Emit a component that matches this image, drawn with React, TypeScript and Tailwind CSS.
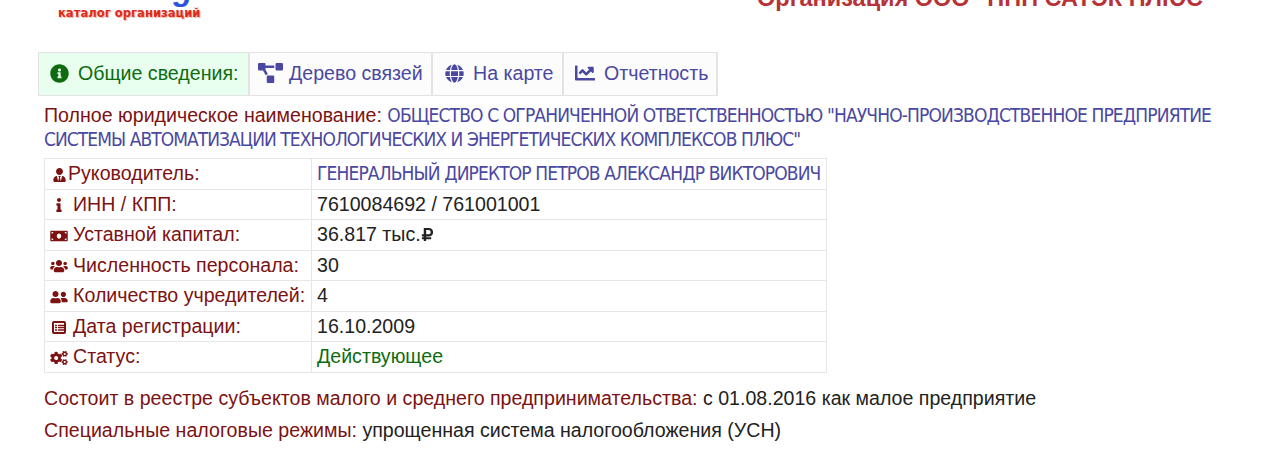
import type { ReactNode } from "react"
import {
  FaChartLine,
  FaCogs,
  FaGlobe,
  FaInfo,
  FaInfoCircle,
  FaMoneyBill,
  FaProjectDiagram,
  FaRubleSign,
  FaUserFriends,
  FaUsers,
  FaUserTie,
} from "react-icons/fa"

function ListIcon() {
  return (
    <svg width="14" height="13" viewBox="0 0 14 13" fill="none" stroke="currentColor">
      <rect x="1" y="1" width="12" height="11" rx="1" strokeWidth="2" />
      <path d="M3 4.5h2M6 4.5h6M3 6.7h2M6 6.7h6M3 9h2M6 9h6" strokeWidth="1.3" />
    </svg>
  )
}

function CapsLink({ children }: { children: ReactNode }) {
  return (
    <a
      href="#"
      className="font-['DejaVu_Sans_Condensed','DejaVu_Sans',sans-serif] text-[19px] leading-none tracking-[-0.87px] text-[#4a48a0]"
    >
      {children}
    </a>
  )
}

function Tab({ icon, children, className }: { icon: ReactNode; children: ReactNode; className: string }) {
  return (
    <li className={`flex h-11 items-center border-y border-r-2 border-[#e3e3e6] pb-0.5 whitespace-nowrap ${className}`}>
      {icon}
      <a href="#">{children}</a>
    </li>
  )
}

function Row({ icon, label, children }: { icon: ReactNode; label: string; children: ReactNode }) {
  return (
    <tr className="h-[30.5px]">
      <td className="border border-[#e6e6e8] p-0 pb-px text-[#7c1212]">
        <div className="flex items-center pl-[5px]">
          <span className="flex shrink-0 justify-center pt-[3px]">{icon}</span>
          <span className="whitespace-nowrap">{label}</span>
        </div>
      </td>
      <td className="border border-[#e6e6e8] p-0 pb-px pl-[5px] whitespace-nowrap">{children}</td>
    </tr>
  )
}

export default function App() {
  return (
    <div className="h-[470px] w-[1280px] overflow-hidden bg-white font-['Liberation_Sans',sans-serif] text-[19.6px] leading-6 text-[#222]">
      <header className="flex h-[52px] justify-between overflow-hidden">
        <div className="ml-[58px] -mt-[31px]">
          <div className="h-9 pl-1 text-[32px] leading-[40px] font-bold tracking-[3.2px] text-[#2b55dd] italic">
            list-org
          </div>
          <div className="font-['DejaVu_Sans',sans-serif] text-[11.6px] leading-4 font-bold whitespace-nowrap text-[#dc2b1c] [text-shadow:1px_1px_1px_#e8b0a8]">
            каталог организаций
          </div>
        </div>
        <h1 className="-mt-[14px] mr-[77px] text-[23.5px] leading-6 font-bold whitespace-nowrap text-[#b73236]">
          Организация ООО "НПП САТЭК ПЛЮС
        </h1>
      </header>

      <main>
        <ul className="ml-[38px] flex text-[#4a48a0]">
          <Tab
            className="w-[212px] border-l bg-[#e8ffef] pl-[11px] text-[#0f6b0f]"
            icon={<FaInfoCircle className="mr-[9px] size-[19px]" />}
          >
            Общие сведения:
          </Tab>
          <Tab className="w-[183px] bg-[#fcfcfd] pl-2" icon={<FaProjectDiagram className="mr-1.5 h-5 w-[25px]" />}>
            Дерево связей
          </Tab>
          <Tab className="w-[131px] bg-[#fcfcfd] pl-3" icon={<FaGlobe className="mr-[9px] size-[19px]" />}>
            На карте
          </Tab>
          <Tab className="w-[154px] bg-[#fcfcfd] pl-[11px]" icon={<FaChartLine className="mr-[9px] size-5" />}>
            Отчетность
          </Tab>
        </ul>

        <p className="mt-[7px] ml-11 whitespace-nowrap text-[#7c1212]">
          Полное юридическое наименование:{" "}
          <CapsLink>
            ОБЩЕСТВО С ОГРАНИЧЕННОЙ ОТВЕТСТВЕННОСТЬЮ "НАУЧНО-ПРОИЗВОДСТВЕННОЕ ПРЕДПРИЯТИЕ
            <br />
            <span className="tracking-[-0.94px]">
              СИСТЕМЫ АВТОМАТИЗАЦИИ ТЕХНОЛОГИЧЕСКИХ И ЭНЕРГЕТИЧЕСКИХ КОМПЛЕКСОВ ПЛЮС"
            </span>
          </CapsLink>
        </p>

        <table className="mt-[7px] ml-11 w-[783px] table-fixed border-collapse">
          <colgroup>
            <col className="w-[267px]" />
            <col />
          </colgroup>
          <tbody>
            <Row icon={<FaUserTie className="mr-[2px] ml-[3px] h-[14px] w-[13px]" />} label="Руководитель:">
              <CapsLink>ГЕНЕРАЛЬНЫЙ ДИРЕКТОР ПЕТРОВ АЛЕКСАНДР ВИКТОРОВИЧ</CapsLink>
            </Row>
            <Row icon={<FaInfo className="mr-[5px] h-[14px] w-[18px]" />} label="ИНН / КПП:">
              7610084692 / 761001001
            </Row>
            <Row icon={<FaMoneyBill className="mr-[5px] h-[14px] w-[18px]" />} label="Уставной капитал:">
              36.817 тыс.
              <FaRubleSign className="inline h-[15px] w-[13px] align-[-1px]" />
            </Row>
            <Row icon={<FaUsers className="mr-[5px] h-[14px] w-[18px]" />} label="Численность персонала:">
              30
            </Row>
            <Row icon={<FaUserFriends className="mr-[5px] h-[14px] w-[18px]" />} label="Количество учредителей:">
              4
            </Row>
            <Row icon={<span className="mr-[7px] ml-0.5"><ListIcon /></span>} label="Дата регистрации:">
              16.10.2009
            </Row>
            <Row icon={<FaCogs className="mr-[5px] h-[14px] w-[18px]" />} label="Статус:">
              <span className="text-[#0f6b0f]">Действующее</span>
            </Row>
          </tbody>
        </table>

        <p className="mt-[13px] ml-11 whitespace-nowrap">
          <span className="text-[#7c1212]">Состоит в реестре субъектов малого и среднего предпринимательства:</span> с
          01.08.2016 как малое предприятие
        </p>
        <p className="mt-2 ml-11 whitespace-nowrap">
          <span className="text-[#7c1212]">Специальные налоговые режимы:</span> упрощенная система налогообложения (УСН)
        </p>
      </main>
    </div>
  )
}
